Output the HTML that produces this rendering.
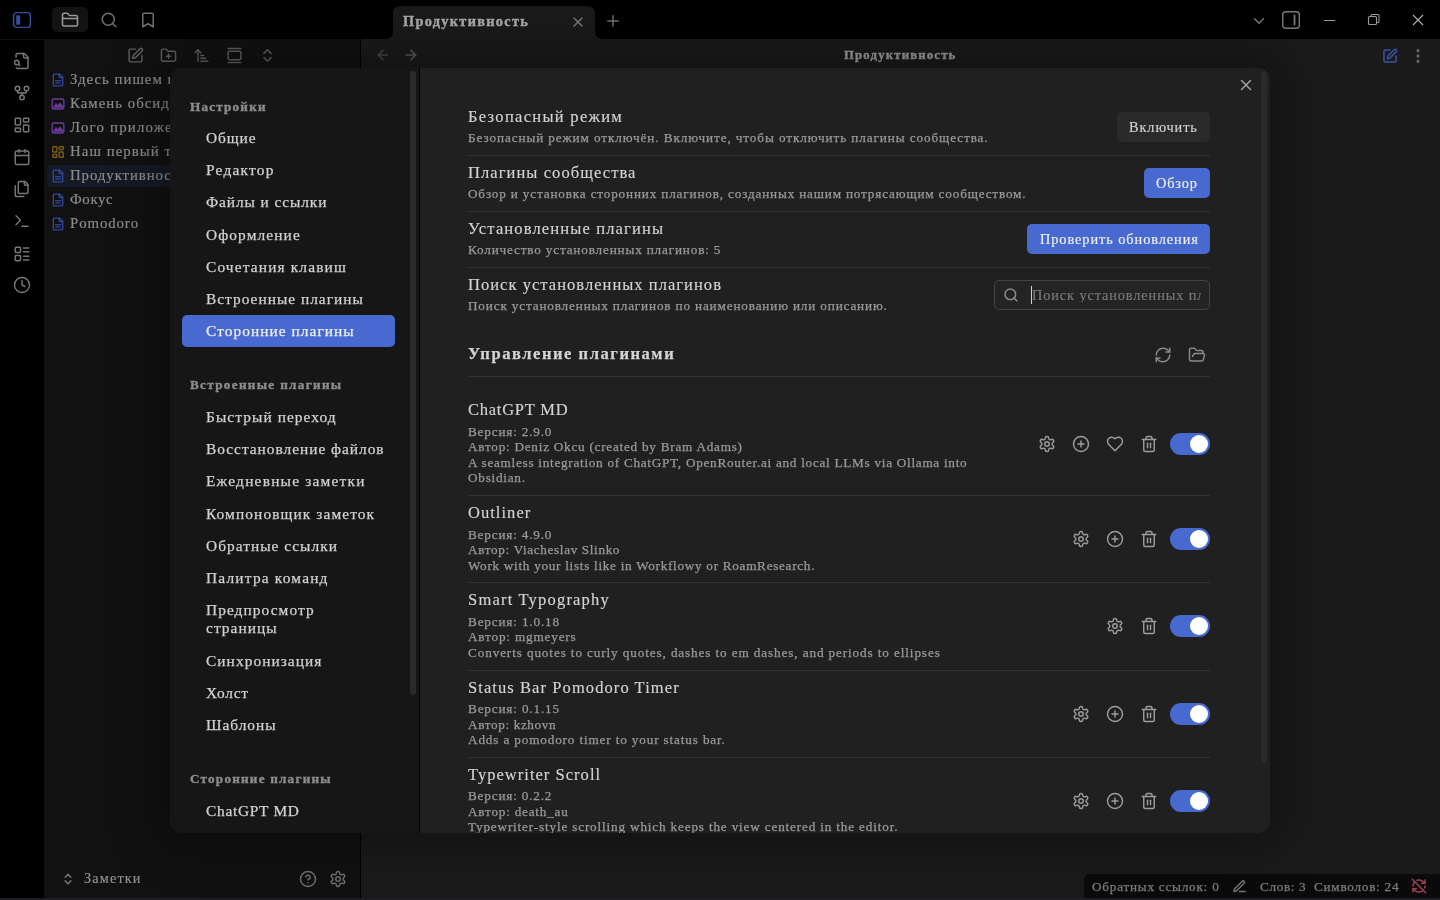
<!DOCTYPE html>
<html><head><meta charset="utf-8"><title>Obsidian</title><style>
*{margin:0;padding:0;box-sizing:border-box}
html,body{width:1440px;height:900px;overflow:hidden;background:#000}
body{position:relative;font-family:"Liberation Serif", serif}
#root{position:absolute;left:0;top:0;width:1440px;height:900px;will-change:transform}
.r{position:absolute}
.t{position:absolute;white-space:nowrap;line-height:1}
.i{position:absolute;overflow:visible}
</style></head>
<body><div id="root"><div class="r" style="left:0px;top:0px;width:1440px;height:39px;background:#000;"></div><div class="r" style="left:0px;top:40px;width:44px;height:858px;background:#000;"></div><div class="r" style="left:0px;top:39px;width:44px;height:1px;background:#101010;"></div><div class="r" style="left:44px;top:39px;width:316px;height:859px;background:#111111;"></div><div class="r" style="left:360px;top:39px;width:1px;height:859px;background:#000;"></div><div class="r" style="left:361px;top:39px;width:1079px;height:859px;background:#1a1a1a;"></div><div class="r" style="left:0px;top:898px;width:1440px;height:2px;background:#1d1e22;"></div><svg class="i" style="left:12px;top:11px" width="20" height="18" viewBox="0 0 20 18"><rect x="1.6" y="1.6" width="16.8" height="14.8" rx="3" fill="none" stroke="#34509a" stroke-width="1.4"/><rect x="4.2" y="4.2" width="4" height="9.6" rx="1.2" fill="#34509a"/></svg><div class="r" style="left:52px;top:7px;width:36px;height:25px;background:#131313;border-radius:5px;"></div><svg class="i" style="left:61.00px;top:10.50px;" width="18" height="18" viewBox="0 0 24 24" fill="none" stroke="#9a9a9a" stroke-width="2.000" stroke-linecap="round" stroke-linejoin="round"><path d="M20 20a2 2 0 0 0 2-2V8a2 2 0 0 0-2-2h-7.9a2 2 0 0 1-1.69-.9L9.6 3.9A2 2 0 0 0 7.93 3H4a2 2 0 0 0-2 2v13a2 2 0 0 0 2 2Z"/><path d="M2 10h20"/></svg><svg class="i" style="left:100.00px;top:10.50px;" width="18" height="18" viewBox="0 0 24 24" fill="none" stroke="#707070" stroke-width="2.000" stroke-linecap="round" stroke-linejoin="round"><circle cx="11" cy="11" r="8"/><path d="m21 21-4.3-4.3"/></svg><svg class="i" style="left:139.00px;top:10.50px;" width="18" height="18" viewBox="0 0 24 24" fill="none" stroke="#707070" stroke-width="2.000" stroke-linecap="round" stroke-linejoin="round"><path d="m19 21-7-4-7 4V5a2 2 0 0 1 2-2h10a2 2 0 0 1 2 2v16z"/></svg><svg class="i" style="left:385px;top:6px" width="218" height="33" viewBox="0 0 218 33"><path d="M0 33 Q8 33 8 25 V8 Q8 0 16 0 H202 Q210 0 210 8 V25 Q210 33 218 33 Z" fill="#1a1a1a"/></svg><div class="t" style="left:403px;top:14px;font-size:14.30px;color:#a8a8a8;font-weight:700;letter-spacing:1.314px;-webkit-text-stroke:0.38px #a8a8a8;">Продуктивность</div><svg class="i" style="left:570.00px;top:14.00px;" width="16" height="16" viewBox="0 0 24 24" fill="none" stroke="#7a7a7a" stroke-width="2.100" stroke-linecap="round" stroke-linejoin="round"><path d="M18 6 6 18"/><path d="m6 6 12 12"/></svg><svg class="i" style="left:604.00px;top:12.00px;" width="18" height="18" viewBox="0 0 24 24" fill="none" stroke="#6e6e6e" stroke-width="2.000" stroke-linecap="round" stroke-linejoin="round"><path d="M5 12h14"/><path d="M12 5v14"/></svg><svg class="i" style="left:1250.00px;top:11.50px;" width="18" height="18" viewBox="0 0 24 24" fill="none" stroke="#777" stroke-width="2.000" stroke-linecap="round" stroke-linejoin="round"><path d="m6 9 6 6 6-6"/></svg><svg class="i" style="left:1281px;top:10px" width="20" height="20" viewBox="0 0 20 20"><rect x="1.7" y="1.7" width="16.6" height="16.6" rx="3" fill="none" stroke="#7a7a7a" stroke-width="1.4"/><rect x="12.6" y="4.6" width="1.8" height="10.8" rx=".9" fill="#7a7a7a"/></svg><div class="r" style="left:1324px;top:20px;width:11px;height:1.3px;background:#999;"></div><svg class="i" style="left:1367px;top:13px" width="14" height="14" viewBox="0 0 14 14" fill="none" stroke="#999" stroke-width="1.1"><rect x="1.5" y="3.5" width="8" height="8" rx="1"/><path d="M4 3.5V2.5a1 1 0 0 1 1-1h6a1 1 0 0 1 1 1v6a1 1 0 0 1-1 1h-1.5"/></svg><svg class="i" style="left:1412px;top:14px" width="12" height="12" viewBox="0 0 12 12" stroke="#aaa" stroke-width="1.2"><path d="M1 1L11 11M11 1L1 11"/></svg><svg class="i" style="left:13.00px;top:52.00px;" width="18" height="18" viewBox="0 0 24 24" fill="none" stroke="#777" stroke-width="1.933" stroke-linecap="round" stroke-linejoin="round"><path d="M14 2v4a2 2 0 0 0 2 2h4"/><path d="M4.268 21a2 2 0 0 0 1.727 1H18a2 2 0 0 0 2-2V7l-5-5H6a2 2 0 0 0-2 2v3"/><path d="m9 18-1.5-1.5"/><circle cx="5" cy="14" r="3"/></svg><svg class="i" style="left:13.00px;top:84.00px;" width="18" height="18" viewBox="0 0 24 24" fill="none" stroke="#777" stroke-width="1.933" stroke-linecap="round" stroke-linejoin="round"><circle cx="12" cy="18" r="3"/><circle cx="6" cy="6" r="3"/><circle cx="18" cy="6" r="3"/><path d="M18 9v2c0 .6-.4 1-1 1H7c-.6 0-1-.4-1-1V9"/><path d="M12 12v3"/></svg><svg class="i" style="left:13.00px;top:116.00px;" width="18" height="18" viewBox="0 0 24 24" fill="none" stroke="#777" stroke-width="1.933" stroke-linecap="round" stroke-linejoin="round"><rect width="7" height="9" x="3" y="3" rx="1"/><rect width="7" height="5" x="14" y="3" rx="1"/><rect width="7" height="9" x="14" y="12" rx="1"/><rect width="7" height="5" x="3" y="16" rx="1"/></svg><svg class="i" style="left:13.00px;top:148.00px;" width="18" height="18" viewBox="0 0 24 24" fill="none" stroke="#777" stroke-width="1.933" stroke-linecap="round" stroke-linejoin="round"><path d="M8 2v4"/><path d="M16 2v4"/><rect width="18" height="18" x="3" y="4" rx="2"/><path d="M3 10h18"/></svg><svg class="i" style="left:13.00px;top:180.00px;" width="18" height="18" viewBox="0 0 24 24" fill="none" stroke="#777" stroke-width="1.933" stroke-linecap="round" stroke-linejoin="round"><path d="M20 7h-3a2 2 0 0 1-2-2V2"/><path d="M9 18a2 2 0 0 1-2-2V4a2 2 0 0 1 2-2h7l4 4v10a2 2 0 0 1-2 2Z"/><path d="M3 7.6v12.8A1.6 1.6 0 0 0 4.6 22h9.8"/></svg><svg class="i" style="left:13.00px;top:212.00px;" width="18" height="18" viewBox="0 0 24 24" fill="none" stroke="#777" stroke-width="1.933" stroke-linecap="round" stroke-linejoin="round"><polyline points="4 17 10 11 4 5"/><line x1="12" x2="20" y1="19" y2="19"/></svg><svg class="i" style="left:13.00px;top:244.50px;" width="18" height="18" viewBox="0 0 24 24" fill="none" stroke="#777" stroke-width="1.933" stroke-linecap="round" stroke-linejoin="round"><rect width="7" height="7" x="3" y="3" rx="1"/><rect width="7" height="7" x="3" y="14" rx="1"/><path d="M14 4h7"/><path d="M14 9h7"/><path d="M14 15h7"/><path d="M14 20h7"/></svg><svg class="i" style="left:13.00px;top:276.00px;" width="18" height="18" viewBox="0 0 24 24" fill="none" stroke="#777" stroke-width="1.933" stroke-linecap="round" stroke-linejoin="round"><circle cx="12" cy="12" r="10"/><polyline points="12 6 12 12 16 14"/></svg><svg class="i" style="left:127.00px;top:47.00px;" width="17" height="17" viewBox="0 0 24 24" fill="none" stroke="#5e5e5e" stroke-width="2.047" stroke-linecap="round" stroke-linejoin="round"><path d="M12 3H5a2 2 0 0 0-2 2v14a2 2 0 0 0 2 2h14a2 2 0 0 0 2-2v-7"/><path d="M18.375 2.625a1 1 0 0 1 3 3l-9.013 9.014a2 2 0 0 1-.853.505l-2.873.84a.5.5 0 0 1-.62-.62l.84-2.873a2 2 0 0 1 .506-.852z"/></svg><svg class="i" style="left:160.00px;top:47.00px;" width="17" height="17" viewBox="0 0 24 24" fill="none" stroke="#5e5e5e" stroke-width="2.047" stroke-linecap="round" stroke-linejoin="round"><path d="M12 10v6"/><path d="M9 13h6"/><path d="M20 20a2 2 0 0 0 2-2V8a2 2 0 0 0-2-2h-7.9a2 2 0 0 1-1.69-.9L9.6 3.9A2 2 0 0 0 7.93 3H4a2 2 0 0 0-2 2v13a2 2 0 0 0 2 2Z"/></svg><svg class="i" style="left:193.00px;top:47.00px;" width="17" height="17" viewBox="0 0 24 24" fill="none" stroke="#5e5e5e" stroke-width="2.047" stroke-linecap="round" stroke-linejoin="round"><path d="m3 8 4-4 4 4"/><path d="M7 4v16"/><path d="M11 12h4"/><path d="M11 16h7"/><path d="M11 20h10"/></svg><svg class="i" style="left:226.00px;top:47.00px;" width="17" height="17" viewBox="0 0 24 24" fill="none" stroke="#5e5e5e" stroke-width="2.047" stroke-linecap="round" stroke-linejoin="round"><path d="M3 2h18"/><rect width="18" height="12" x="3" y="6" rx="2"/><path d="M3 22h18"/></svg><svg class="i" style="left:259.00px;top:47.00px;" width="17" height="17" viewBox="0 0 24 24" fill="none" stroke="#5e5e5e" stroke-width="2.047" stroke-linecap="round" stroke-linejoin="round"><path d="m7 15 5 5 5-5"/><path d="m7 9 5-5 5 5"/></svg><div class="r" style="left:47px;top:165px;width:130px;height:22px;background:#151a26;border-radius:4px;"></div><svg class="i" style="left:51.00px;top:72.50px;" width="14" height="14" viewBox="0 0 24 24" fill="none" stroke="#30499a" stroke-width="2.314" stroke-linecap="round" stroke-linejoin="round"><path d="M15 2H6a2 2 0 0 0-2 2v16a2 2 0 0 0 2 2h12a2 2 0 0 0 2-2V7Z"/><path d="M14 2v4a2 2 0 0 0 2 2h4"/><path d="M16 13H8"/><path d="M16 17H8"/></svg><div class="t" style="left:70px;top:72px;font-size:14.85px;color:#8c8c8c;letter-spacing:0.986px;-webkit-text-stroke:0.17px #8c8c8c;">Здесь пишем к</div><svg class="i" style="left:51.00px;top:96.50px;" width="14" height="14" viewBox="0 0 24 24" fill="none" stroke="#6e3c9e" stroke-width="2.314" stroke-linecap="round" stroke-linejoin="round"><rect width="20" height="17" x="2" y="3.5" rx="3"/><path d="M4.5 18 L8.5 11 L11.5 14.5 L15.5 10 L19.5 15.5 V18 Z" fill="#6a3a98" stroke-width="1.2"/></svg><div class="t" style="left:70px;top:96px;font-size:14.85px;color:#8c8c8c;letter-spacing:1.002px;-webkit-text-stroke:0.17px #8c8c8c;">Камень обсидиана</div><svg class="i" style="left:51.00px;top:120.50px;" width="14" height="14" viewBox="0 0 24 24" fill="none" stroke="#6e3c9e" stroke-width="2.314" stroke-linecap="round" stroke-linejoin="round"><rect width="20" height="17" x="2" y="3.5" rx="3"/><path d="M4.5 18 L8.5 11 L11.5 14.5 L15.5 10 L19.5 15.5 V18 Z" fill="#6a3a98" stroke-width="1.2"/></svg><div class="t" style="left:70px;top:120px;font-size:14.85px;color:#8c8c8c;letter-spacing:1.203px;-webkit-text-stroke:0.17px #8c8c8c;">Лого приложения</div><svg class="i" style="left:51.00px;top:144.50px;" width="14" height="14" viewBox="0 0 24 24" fill="none" stroke="#7a5c18" stroke-width="2.314" stroke-linecap="round" stroke-linejoin="round"><rect width="7" height="9" x="3" y="3" rx="1"/><rect width="7" height="5" x="14" y="3" rx="1"/><rect width="7" height="9" x="14" y="12" rx="1"/><rect width="7" height="5" x="3" y="16" rx="1"/></svg><div class="t" style="left:70px;top:144px;font-size:14.85px;color:#8c8c8c;letter-spacing:1.051px;-webkit-text-stroke:0.17px #8c8c8c;">Наш первый текст</div><svg class="i" style="left:51.00px;top:168.50px;" width="14" height="14" viewBox="0 0 24 24" fill="none" stroke="#30499a" stroke-width="2.314" stroke-linecap="round" stroke-linejoin="round"><path d="M15 2H6a2 2 0 0 0-2 2v16a2 2 0 0 0 2 2h12a2 2 0 0 0 2-2V7Z"/><path d="M14 2v4a2 2 0 0 0 2 2h4"/><path d="M16 13H8"/><path d="M16 17H8"/></svg><div class="t" style="left:70px;top:168px;font-size:14.85px;color:#8c8c8c;letter-spacing:0.904px;-webkit-text-stroke:0.17px #8c8c8c;">Продуктивность</div><svg class="i" style="left:51.00px;top:192.50px;" width="14" height="14" viewBox="0 0 24 24" fill="none" stroke="#30499a" stroke-width="2.314" stroke-linecap="round" stroke-linejoin="round"><path d="M15 2H6a2 2 0 0 0-2 2v16a2 2 0 0 0 2 2h12a2 2 0 0 0 2-2V7Z"/><path d="M14 2v4a2 2 0 0 0 2 2h4"/><path d="M16 13H8"/><path d="M16 17H8"/></svg><div class="t" style="left:70px;top:192px;font-size:14.85px;color:#8c8c8c;letter-spacing:0.622px;-webkit-text-stroke:0.17px #8c8c8c;">Фокус</div><svg class="i" style="left:51.00px;top:216.50px;" width="14" height="14" viewBox="0 0 24 24" fill="none" stroke="#30499a" stroke-width="2.314" stroke-linecap="round" stroke-linejoin="round"><path d="M15 2H6a2 2 0 0 0-2 2v16a2 2 0 0 0 2 2h12a2 2 0 0 0 2-2V7Z"/><path d="M14 2v4a2 2 0 0 0 2 2h4"/><path d="M16 13H8"/><path d="M16 17H8"/></svg><div class="t" style="left:70px;top:216px;font-size:14.85px;color:#8c8c8c;letter-spacing:0.887px;-webkit-text-stroke:0.17px #8c8c8c;">Pomodoro</div><svg class="i" style="left:61.00px;top:872.00px;" width="14" height="14" viewBox="0 0 24 24" fill="none" stroke="#777" stroke-width="2.400" stroke-linecap="round" stroke-linejoin="round"><path d="m7 15 5 5 5-5"/><path d="m7 9 5-5 5 5"/></svg><div class="t" style="left:84px;top:871px;font-size:14.30px;color:#939393;letter-spacing:1.127px;-webkit-text-stroke:0.15px #939393;">Заметки</div><svg class="i" style="left:299.00px;top:870.00px;" width="18" height="18" viewBox="0 0 24 24" fill="none" stroke="#6e6e6e" stroke-width="2.000" stroke-linecap="round" stroke-linejoin="round"><circle cx="12" cy="12" r="10"/><path d="M9.09 9a3 3 0 0 1 5.83 1c0 2-3 3-3 3"/><path d="M12 17h.01"/></svg><svg class="i" style="left:329.00px;top:870.00px;" width="18" height="18" viewBox="0 0 24 24" fill="none" stroke="#6e6e6e" stroke-width="2.000" stroke-linecap="round" stroke-linejoin="round"><path d="M12.22 2h-.44a2 2 0 0 0-2 2v.18a2 2 0 0 1-1 1.73l-.43.25a2 2 0 0 1-2 0l-.15-.08a2 2 0 0 0-2.73.73l-.22.38a2 2 0 0 0 .73 2.730l.15.1a2 2 0 0 1 1 1.72v.51a2 2 0 0 1-1 1.74l-.15.09a2 2 0 0 0-.73 2.73l.22.38a2 2 0 0 0 2.73.73l.15-.08a2 2 0 0 1 2 0l.43.25a2 2 0 0 1 1 1.73V20a2 2 0 0 0 2 2h.44a2 2 0 0 0 2-2v-.18a2 2 0 0 1 1-1.73l.43-.25a2 2 0 0 1 2 0l.15.08a2 2 0 0 0 2.73-.73l.22-.39a2 2 0 0 0-.73-2.73l-.15-.08a2 2 0 0 1-1-1.74v-.5a2 2 0 0 1 1-1.74l.15-.09a2 2 0 0 0 .73-2.73l-.22-.38a2 2 0 0 0-2.73-.73l-.15.08a2 2 0 0 1-2 0l-.43-.25a2 2 0 0 1-1-1.73V4a2 2 0 0 0-2-2z"/><circle cx="12" cy="12" r="3"/></svg><svg class="i" style="left:375.00px;top:47.00px;" width="16" height="16" viewBox="0 0 24 24" fill="none" stroke="#454545" stroke-width="2.400" stroke-linecap="round" stroke-linejoin="round"><path d="m12 19-7-7 7-7"/><path d="M19 12H5"/></svg><svg class="i" style="left:403.00px;top:47.00px;" width="16" height="16" viewBox="0 0 24 24" fill="none" stroke="#5a5a5a" stroke-width="2.400" stroke-linecap="round" stroke-linejoin="round"><path d="M5 12h14"/><path d="m12 5 7 7-7 7"/></svg><div class="t" style="left:844px;top:49px;font-size:12.76px;color:#9a9a9a;font-weight:700;letter-spacing:1.172px;-webkit-text-stroke:0.38px #9a9a9a;">Продуктивность</div><svg class="i" style="left:1382.00px;top:47.50px;" width="16" height="16" viewBox="0 0 24 24" fill="none" stroke="#3a55a5" stroke-width="2.250" stroke-linecap="round" stroke-linejoin="round"><path d="M12 3H5a2 2 0 0 0-2 2v14a2 2 0 0 0 2 2h14a2 2 0 0 0 2-2v-7"/><path d="M18.375 2.625a1 1 0 0 1 3 3l-9.013 9.014a2 2 0 0 1-.853.505l-2.873.84a.5.5 0 0 1-.62-.62l.84-2.873a2 2 0 0 1 .506-.852z"/></svg><svg class="i" style="left:1409.00px;top:46.50px;" width="18" height="18" viewBox="0 0 24 24" fill="none" stroke="#666" stroke-width="2.400" stroke-linecap="round" stroke-linejoin="round"><circle cx="12" cy="12" r="1"/><circle cx="12" cy="5" r="1"/><circle cx="12" cy="19" r="1"/></svg><div class="r" style="left:1084px;top:874px;width:356px;height:24px;background:#0a0a0a;border-top-left-radius:6px;"></div><div class="t" style="left:1092px;top:880px;font-size:13.20px;color:#7d7d7d;letter-spacing:0.771px;-webkit-text-stroke:0.25px #7d7d7d;">Обратных ссылок: 0</div><svg class="i" style="left:1231.50px;top:878.50px;" width="15" height="15" viewBox="0 0 24 24" fill="none" stroke="#777" stroke-width="2.240" stroke-linecap="round" stroke-linejoin="round"><path d="M12 20h9"/><path d="M16.376 3.622a1 1 0 0 1 3.002 3.002L7.368 18.635a2 2 0 0 1-.855.506l-2.872.838a.5.5 0 0 1-.62-.62l.838-2.872a2 2 0 0 1 .506-.854z"/></svg><div class="t" style="left:1260px;top:880px;font-size:13.20px;color:#7d7d7d;letter-spacing:0.645px;-webkit-text-stroke:0.25px #7d7d7d;">Слов: 3</div><div class="t" style="left:1314px;top:880px;font-size:13.20px;color:#7d7d7d;letter-spacing:0.743px;-webkit-text-stroke:0.25px #7d7d7d;">Символов: 24</div><svg class="i" style="left:1411.00px;top:878.00px;" width="16" height="16" viewBox="0 0 24 24" fill="none" stroke="#a04252" stroke-width="2.250" stroke-linecap="round" stroke-linejoin="round"><path d="M21 8L18.74 5.74A9.75 9.75 0 0 0 12 3C11 3 10.03 3.160 9.13 3.47"/><path d="M8 16H3v5"/><path d="M3 12C3 9.51 4 7.26 5.64 5.64"/><path d="m3 16 2.26 2.26A9.75 9.75 0 0 0 12 21c2.49 0 4.74-1 6.36-2.64"/><path d="M21 12c0 1-.16 1.97-.47 2.87"/><path d="M21 3v5h-5"/><path d="M22 22 2 2"/></svg><div class="r" style="left:170px;top:68px;width:1100px;height:765px;border-radius:12px;box-shadow:0 0 50px 10px rgba(0,0,0,0.35);"></div><div class="r" style="left:0;top:0;width:1440px;height:900px;clip-path:inset(68px 170px 67px 170px round 12px);"><div class="r" style="left:170px;top:68px;width:250px;height:765px;background:#161616;"></div><div class="r" style="left:419px;top:68px;width:1px;height:765px;background:#000;"></div><div class="r" style="left:420px;top:68px;width:850px;height:765px;background:#202020;"></div><div class="r" style="left:410px;top:71px;width:6px;height:624px;background:#2a2a2a;border-radius:3px;"></div><div class="r" style="left:1261px;top:71px;width:6px;height:692px;background:#2a2a2a;border-radius:3px;"></div><div class="t" style="left:190px;top:100px;font-size:13.20px;color:#8c8c8c;font-weight:700;letter-spacing:1.182px;-webkit-text-stroke:0.38px #8c8c8c;">Настройки</div><div class="t" style="left:206px;top:130px;font-size:15.40px;color:#d2d2d2;letter-spacing:0.934px;-webkit-text-stroke:0.25px #d2d2d2;">Общие</div><div class="t" style="left:206px;top:162px;font-size:15.40px;color:#d2d2d2;letter-spacing:1.215px;-webkit-text-stroke:0.25px #d2d2d2;">Редактор</div><div class="t" style="left:206px;top:194px;font-size:15.40px;color:#d2d2d2;letter-spacing:0.914px;-webkit-text-stroke:0.25px #d2d2d2;">Файлы и ссылки</div><div class="t" style="left:206px;top:227px;font-size:15.40px;color:#d2d2d2;letter-spacing:1.103px;-webkit-text-stroke:0.25px #d2d2d2;">Оформление</div><div class="t" style="left:206px;top:259px;font-size:15.40px;color:#d2d2d2;letter-spacing:1.145px;-webkit-text-stroke:0.25px #d2d2d2;">Сочетания клавиш</div><div class="t" style="left:206px;top:291px;font-size:15.40px;color:#d2d2d2;letter-spacing:1.001px;-webkit-text-stroke:0.25px #d2d2d2;">Встроенные плагины</div><div class="r" style="left:182px;top:315px;width:213px;height:32px;background:#486ad0;border-radius:5px;"></div><div class="t" style="left:206px;top:323px;font-size:15.40px;color:#f0f0f0;letter-spacing:1.046px;-webkit-text-stroke:0.25px #f0f0f0;">Сторонние плагины</div><div class="t" style="left:190px;top:378px;font-size:13.20px;color:#8c8c8c;font-weight:700;letter-spacing:1.312px;-webkit-text-stroke:0.38px #8c8c8c;">Встроенные плагины</div><div class="t" style="left:206px;top:409px;font-size:15.40px;color:#d2d2d2;letter-spacing:1.073px;-webkit-text-stroke:0.25px #d2d2d2;">Быстрый переход</div><div class="t" style="left:206px;top:441px;font-size:15.40px;color:#d2d2d2;letter-spacing:0.975px;-webkit-text-stroke:0.25px #d2d2d2;">Восстановление файлов</div><div class="t" style="left:206px;top:473px;font-size:15.40px;color:#d2d2d2;letter-spacing:1.216px;-webkit-text-stroke:0.25px #d2d2d2;">Ежедневные заметки</div><div class="t" style="left:206px;top:506px;font-size:15.40px;color:#d2d2d2;letter-spacing:1.095px;-webkit-text-stroke:0.25px #d2d2d2;">Компоновщик заметок</div><div class="t" style="left:206px;top:538px;font-size:15.40px;color:#d2d2d2;letter-spacing:1.034px;-webkit-text-stroke:0.25px #d2d2d2;">Обратные ссылки</div><div class="t" style="left:206px;top:570px;font-size:15.40px;color:#d2d2d2;letter-spacing:1.195px;-webkit-text-stroke:0.25px #d2d2d2;">Палитра команд</div><div class="t" style="left:206px;top:602px;font-size:15.40px;color:#d2d2d2;letter-spacing:1.060px;-webkit-text-stroke:0.25px #d2d2d2;">Предпросмотр</div><div class="t" style="left:206px;top:620px;font-size:15.40px;color:#d2d2d2;letter-spacing:1.047px;-webkit-text-stroke:0.25px #d2d2d2;">страницы</div><div class="t" style="left:206px;top:653px;font-size:15.40px;color:#d2d2d2;letter-spacing:1.055px;-webkit-text-stroke:0.25px #d2d2d2;">Синхронизация</div><div class="t" style="left:206px;top:685px;font-size:15.40px;color:#d2d2d2;letter-spacing:0.800px;-webkit-text-stroke:0.25px #d2d2d2;">Холст</div><div class="t" style="left:206px;top:717px;font-size:15.40px;color:#d2d2d2;letter-spacing:0.969px;-webkit-text-stroke:0.25px #d2d2d2;">Шаблоны</div><div class="t" style="left:190px;top:772px;font-size:13.20px;color:#8c8c8c;font-weight:700;letter-spacing:1.209px;-webkit-text-stroke:0.38px #8c8c8c;">Сторонние плагины</div><div class="t" style="left:206px;top:803px;font-size:15.40px;color:#d2d2d2;letter-spacing:0.714px;-webkit-text-stroke:0.25px #d2d2d2;">ChatGPT MD</div><div class="t" style="left:468px;top:109px;font-size:16.50px;color:#d4d4d4;letter-spacing:1.303px;-webkit-text-stroke:0.15px #d4d4d4;">Безопасный режим</div><div class="t" style="left:468px;top:131px;font-size:13.20px;color:#9a9a9a;letter-spacing:0.906px;-webkit-text-stroke:0.25px #9a9a9a;">Безопасный режим отключён. Включите, чтобы отключить плагины сообщества.</div><div class="r" style="left:468px;top:155px;width:742px;height:1px;background:#333333;"></div><div class="t" style="left:468px;top:165px;font-size:16.50px;color:#d4d4d4;letter-spacing:1.073px;-webkit-text-stroke:0.15px #d4d4d4;">Плагины сообщества</div><div class="t" style="left:468px;top:187px;font-size:13.20px;color:#9a9a9a;letter-spacing:0.833px;-webkit-text-stroke:0.25px #9a9a9a;">Обзор и установка сторонних плагинов, созданных нашим потрясающим сообществом.</div><div class="r" style="left:468px;top:211px;width:742px;height:1px;background:#333333;"></div><div class="t" style="left:468px;top:221px;font-size:16.50px;color:#d4d4d4;letter-spacing:1.149px;-webkit-text-stroke:0.15px #d4d4d4;">Установленные плагины</div><div class="t" style="left:468px;top:243px;font-size:13.20px;color:#9a9a9a;letter-spacing:0.833px;-webkit-text-stroke:0.25px #9a9a9a;">Количество установленных плагинов: 5</div><div class="r" style="left:468px;top:267px;width:742px;height:1px;background:#333333;"></div><div class="t" style="left:468px;top:277px;font-size:16.50px;color:#d4d4d4;letter-spacing:1.036px;-webkit-text-stroke:0.15px #d4d4d4;">Поиск установленных плагинов</div><div class="t" style="left:468px;top:299px;font-size:13.20px;color:#9a9a9a;letter-spacing:0.843px;-webkit-text-stroke:0.25px #9a9a9a;">Поиск установленных плагинов по наименованию или описанию.</div><div class="r" style="left:1117px;top:112px;width:93px;height:30px;background:#2a2a2a;border-radius:5px;"></div><div class="t" style="left:1129px;top:120px;font-size:14.30px;color:#d4d4d4;letter-spacing:0.928px;-webkit-text-stroke:0.15px #d4d4d4;">Включить</div><div class="r" style="left:1144px;top:168px;width:66px;height:30px;background:#486ad0;border-radius:5px;"></div><div class="t" style="left:1156px;top:176px;font-size:14.30px;color:#f0f0f0;letter-spacing:0.853px;-webkit-text-stroke:0.15px #f0f0f0;">Обзор</div><div class="r" style="left:1027px;top:224px;width:183px;height:30px;background:#486ad0;border-radius:5px;"></div><div class="t" style="left:1040px;top:232px;font-size:14.30px;color:#f0f0f0;letter-spacing:0.946px;-webkit-text-stroke:0.15px #f0f0f0;">Проверить обновления</div><div class="r" style="left:994px;top:280px;width:216px;height:30px;background:#242424;border-radius:5px;border:1px solid #444;"></div><svg class="i" style="left:1003.00px;top:287.00px;" width="16" height="16" viewBox="0 0 24 24" fill="none" stroke="#8a8a8a" stroke-width="2.250" stroke-linecap="round" stroke-linejoin="round"><circle cx="11" cy="11" r="8"/><path d="m21 21-4.3-4.3"/></svg><div class="r" style="left:1031px;top:286px;width:1px;height:18px;background:#d0d0d0;"></div><div class="t" style="left:1032px;top:288px;font-size:14.30px;color:#7a7a7a;letter-spacing:0.900px;-webkit-text-stroke:0.15px #7a7a7a;width:169px;overflow:hidden;">Поиск установленных плагинов</div><div class="t" style="left:468px;top:346px;font-size:16.50px;color:#d4d4d4;font-weight:700;letter-spacing:1.563px;-webkit-text-stroke:0.25px #d4d4d4;">Управление плагинами</div><svg class="i" style="left:1154.00px;top:346.00px;" width="18" height="18" viewBox="0 0 24 24" fill="none" stroke="#8a8a8a" stroke-width="2.000" stroke-linecap="round" stroke-linejoin="round"><path d="M3 12a9 9 0 0 1 9-9 9.75 9.75 0 0 1 6.74 2.74L21 8"/><path d="M21 3v5h-5"/><path d="M21 12a9 9 0 0 1-9 9 9.75 9.75 0 0 1-6.74-2.74L3 16"/><path d="M8 16H3v5"/></svg><svg class="i" style="left:1188.00px;top:346.00px;" width="18" height="18" viewBox="0 0 24 24" fill="none" stroke="#8a8a8a" stroke-width="2.000" stroke-linecap="round" stroke-linejoin="round"><path d="m6 14 1.5-2.9A2 2 0 0 1 9.24 10H20a2 2 0 0 1 1.94 2.5l-1.54 6a2 2 0 0 1-1.95 1.5H4a2 2 0 0 1-2-2V5a2 2 0 0 1 2-2h3.9a2 2 0 0 1 1.69.9l.81 1.2a2 2 0 0 0 1.67.9H18a2 2 0 0 1 2 2v2"/></svg><div class="r" style="left:468px;top:376px;width:742px;height:1px;background:#333333;"></div><div class="t" style="left:468px;top:402px;font-size:16.50px;color:#d4d4d4;letter-spacing:0.759px;-webkit-text-stroke:0.15px #d4d4d4;">ChatGPT MD</div><div class="t" style="left:468px;top:425px;font-size:13.20px;color:#9a9a9a;letter-spacing:0.825px;-webkit-text-stroke:0.25px #9a9a9a;">Версия: 2.9.0</div><div class="t" style="left:468px;top:440px;font-size:13.20px;color:#9a9a9a;letter-spacing:0.758px;-webkit-text-stroke:0.25px #9a9a9a;">Автор: Deniz Okcu (created by Bram Adams)</div><div class="t" style="left:468px;top:456px;font-size:13.20px;color:#9a9a9a;letter-spacing:0.729px;-webkit-text-stroke:0.25px #9a9a9a;">A seamless integration of ChatGPT, OpenRouter.ai and local LLMs via Ollama into</div><div class="t" style="left:468px;top:471px;font-size:13.20px;color:#9a9a9a;letter-spacing:0.757px;-webkit-text-stroke:0.25px #9a9a9a;">Obsidian.</div><svg class="i" style="left:1038.00px;top:435.00px;" width="18" height="18" viewBox="0 0 24 24" fill="none" stroke="#9c9c9c" stroke-width="1.933" stroke-linecap="round" stroke-linejoin="round"><path d="M12.22 2h-.44a2 2 0 0 0-2 2v.18a2 2 0 0 1-1 1.73l-.43.25a2 2 0 0 1-2 0l-.15-.08a2 2 0 0 0-2.73.73l-.22.38a2 2 0 0 0 .73 2.730l.15.1a2 2 0 0 1 1 1.72v.51a2 2 0 0 1-1 1.74l-.15.09a2 2 0 0 0-.73 2.73l.22.38a2 2 0 0 0 2.73.73l.15-.08a2 2 0 0 1 2 0l.43.25a2 2 0 0 1 1 1.73V20a2 2 0 0 0 2 2h.44a2 2 0 0 0 2-2v-.18a2 2 0 0 1 1-1.73l.43-.25a2 2 0 0 1 2 0l.15.08a2 2 0 0 0 2.73-.73l.22-.39a2 2 0 0 0-.73-2.73l-.15-.08a2 2 0 0 1-1-1.74v-.5a2 2 0 0 1 1-1.74l.15-.09a2 2 0 0 0 .73-2.73l-.22-.38a2 2 0 0 0-2.73-.73l-.15.08a2 2 0 0 1-2 0l-.43-.25a2 2 0 0 1-1-1.73V4a2 2 0 0 0-2-2z"/><circle cx="12" cy="12" r="3"/></svg><svg class="i" style="left:1072.00px;top:435.00px;" width="18" height="18" viewBox="0 0 24 24" fill="none" stroke="#9c9c9c" stroke-width="1.933" stroke-linecap="round" stroke-linejoin="round"><circle cx="12" cy="12" r="10"/><path d="M8 12h8"/><path d="M12 8v8"/></svg><svg class="i" style="left:1106.00px;top:435.00px;" width="18" height="18" viewBox="0 0 24 24" fill="none" stroke="#9c9c9c" stroke-width="1.933" stroke-linecap="round" stroke-linejoin="round"><path d="M19 14c1.49-1.46 3-3.21 3-5.5A5.5 5.5 0 0 0 16.5 3c-1.76 0-3 .5-4.5 2-1.5-1.5-2.74-2-4.5-2A5.5 5.5 0 0 0 2 8.5c0 2.3 1.5 4.05 3 5.5l7 7Z"/></svg><svg class="i" style="left:1140.00px;top:435.00px;" width="18" height="18" viewBox="0 0 24 24" fill="none" stroke="#9c9c9c" stroke-width="1.933" stroke-linecap="round" stroke-linejoin="round"><path d="M3 6h18"/><path d="M19 6v14c0 1-1 2-2 2H7c-1 0-2-1-2-2V6"/><path d="M8 6V4c0-1 1-2 2-2h4c1 0 2 1 2 2v2"/><line x1="10" x2="10" y1="11" y2="17"/><line x1="14" x2="14" y1="11" y2="17"/></svg><div class="r" style="left:1170px;top:433px;width:40px;height:22px;background:#486ad0;border-radius:11px;"></div><div class="r" style="left:1190px;top:435px;width:18px;height:18px;border-radius:9px;background:#fff"></div><div class="r" style="left:468px;top:495px;width:742px;height:1px;background:#333333;"></div><div class="t" style="left:468px;top:505px;font-size:16.50px;color:#d4d4d4;letter-spacing:1.037px;-webkit-text-stroke:0.15px #d4d4d4;">Outliner</div><div class="t" style="left:468px;top:528px;font-size:13.20px;color:#9a9a9a;letter-spacing:0.825px;-webkit-text-stroke:0.25px #9a9a9a;">Версия: 4.9.0</div><div class="t" style="left:468px;top:543px;font-size:13.20px;color:#9a9a9a;letter-spacing:0.642px;-webkit-text-stroke:0.25px #9a9a9a;">Автор: Viacheslav Slinko</div><div class="t" style="left:468px;top:559px;font-size:13.20px;color:#9a9a9a;letter-spacing:0.715px;-webkit-text-stroke:0.25px #9a9a9a;">Work with your lists like in Workflowy or RoamResearch.</div><svg class="i" style="left:1072.00px;top:530.00px;" width="18" height="18" viewBox="0 0 24 24" fill="none" stroke="#9c9c9c" stroke-width="1.933" stroke-linecap="round" stroke-linejoin="round"><path d="M12.22 2h-.44a2 2 0 0 0-2 2v.18a2 2 0 0 1-1 1.73l-.43.25a2 2 0 0 1-2 0l-.15-.08a2 2 0 0 0-2.73.73l-.22.38a2 2 0 0 0 .73 2.730l.15.1a2 2 0 0 1 1 1.72v.51a2 2 0 0 1-1 1.74l-.15.09a2 2 0 0 0-.73 2.73l.22.38a2 2 0 0 0 2.73.73l.15-.08a2 2 0 0 1 2 0l.43.25a2 2 0 0 1 1 1.73V20a2 2 0 0 0 2 2h.44a2 2 0 0 0 2-2v-.18a2 2 0 0 1 1-1.73l.43-.25a2 2 0 0 1 2 0l.15.08a2 2 0 0 0 2.73-.73l.22-.39a2 2 0 0 0-.73-2.73l-.15-.08a2 2 0 0 1-1-1.74v-.5a2 2 0 0 1 1-1.74l.15-.09a2 2 0 0 0 .73-2.73l-.22-.38a2 2 0 0 0-2.73-.73l-.15.08a2 2 0 0 1-2 0l-.43-.25a2 2 0 0 1-1-1.73V4a2 2 0 0 0-2-2z"/><circle cx="12" cy="12" r="3"/></svg><svg class="i" style="left:1106.00px;top:530.00px;" width="18" height="18" viewBox="0 0 24 24" fill="none" stroke="#9c9c9c" stroke-width="1.933" stroke-linecap="round" stroke-linejoin="round"><circle cx="12" cy="12" r="10"/><path d="M8 12h8"/><path d="M12 8v8"/></svg><svg class="i" style="left:1140.00px;top:530.00px;" width="18" height="18" viewBox="0 0 24 24" fill="none" stroke="#9c9c9c" stroke-width="1.933" stroke-linecap="round" stroke-linejoin="round"><path d="M3 6h18"/><path d="M19 6v14c0 1-1 2-2 2H7c-1 0-2-1-2-2V6"/><path d="M8 6V4c0-1 1-2 2-2h4c1 0 2 1 2 2v2"/><line x1="10" x2="10" y1="11" y2="17"/><line x1="14" x2="14" y1="11" y2="17"/></svg><div class="r" style="left:1170px;top:528px;width:40px;height:22px;background:#486ad0;border-radius:11px;"></div><div class="r" style="left:1190px;top:530px;width:18px;height:18px;border-radius:9px;background:#fff"></div><div class="r" style="left:468px;top:582px;width:742px;height:1px;background:#333333;"></div><div class="t" style="left:468px;top:592px;font-size:16.50px;color:#d4d4d4;letter-spacing:1.202px;-webkit-text-stroke:0.15px #d4d4d4;">Smart Typography</div><div class="t" style="left:468px;top:615px;font-size:13.20px;color:#9a9a9a;letter-spacing:0.840px;-webkit-text-stroke:0.25px #9a9a9a;">Версия: 1.0.18</div><div class="t" style="left:468px;top:630px;font-size:13.20px;color:#9a9a9a;letter-spacing:0.831px;-webkit-text-stroke:0.25px #9a9a9a;">Автор: mgmeyers</div><div class="t" style="left:468px;top:646px;font-size:13.20px;color:#9a9a9a;letter-spacing:0.887px;-webkit-text-stroke:0.25px #9a9a9a;">Converts quotes to curly quotes, dashes to em dashes, and periods to ellipses</div><svg class="i" style="left:1106.00px;top:617.00px;" width="18" height="18" viewBox="0 0 24 24" fill="none" stroke="#9c9c9c" stroke-width="1.933" stroke-linecap="round" stroke-linejoin="round"><path d="M12.22 2h-.44a2 2 0 0 0-2 2v.18a2 2 0 0 1-1 1.73l-.43.25a2 2 0 0 1-2 0l-.15-.08a2 2 0 0 0-2.73.73l-.22.38a2 2 0 0 0 .73 2.730l.15.1a2 2 0 0 1 1 1.72v.51a2 2 0 0 1-1 1.74l-.15.09a2 2 0 0 0-.73 2.73l.22.38a2 2 0 0 0 2.73.73l.15-.08a2 2 0 0 1 2 0l.43.25a2 2 0 0 1 1 1.73V20a2 2 0 0 0 2 2h.44a2 2 0 0 0 2-2v-.18a2 2 0 0 1 1-1.73l.43-.25a2 2 0 0 1 2 0l.15.08a2 2 0 0 0 2.73-.73l.22-.39a2 2 0 0 0-.73-2.73l-.15-.08a2 2 0 0 1-1-1.74v-.5a2 2 0 0 1 1-1.74l.15-.09a2 2 0 0 0 .73-2.73l-.22-.38a2 2 0 0 0-2.73-.73l-.15.08a2 2 0 0 1-2 0l-.43-.25a2 2 0 0 1-1-1.73V4a2 2 0 0 0-2-2z"/><circle cx="12" cy="12" r="3"/></svg><svg class="i" style="left:1140.00px;top:617.00px;" width="18" height="18" viewBox="0 0 24 24" fill="none" stroke="#9c9c9c" stroke-width="1.933" stroke-linecap="round" stroke-linejoin="round"><path d="M3 6h18"/><path d="M19 6v14c0 1-1 2-2 2H7c-1 0-2-1-2-2V6"/><path d="M8 6V4c0-1 1-2 2-2h4c1 0 2 1 2 2v2"/><line x1="10" x2="10" y1="11" y2="17"/><line x1="14" x2="14" y1="11" y2="17"/></svg><div class="r" style="left:1170px;top:615px;width:40px;height:22px;background:#486ad0;border-radius:11px;"></div><div class="r" style="left:1190px;top:617px;width:18px;height:18px;border-radius:9px;background:#fff"></div><div class="r" style="left:468px;top:670px;width:742px;height:1px;background:#333333;"></div><div class="t" style="left:468px;top:680px;font-size:16.50px;color:#d4d4d4;letter-spacing:1.081px;-webkit-text-stroke:0.15px #d4d4d4;">Status Bar Pomodoro Timer</div><div class="t" style="left:468px;top:702px;font-size:13.20px;color:#9a9a9a;letter-spacing:0.840px;-webkit-text-stroke:0.25px #9a9a9a;">Версия: 0.1.15</div><div class="t" style="left:468px;top:718px;font-size:13.20px;color:#9a9a9a;letter-spacing:0.641px;-webkit-text-stroke:0.25px #9a9a9a;">Автор: kzhovn</div><div class="t" style="left:468px;top:733px;font-size:13.20px;color:#9a9a9a;letter-spacing:0.854px;-webkit-text-stroke:0.25px #9a9a9a;">Adds a pomodoro timer to your status bar.</div><svg class="i" style="left:1072.00px;top:705.00px;" width="18" height="18" viewBox="0 0 24 24" fill="none" stroke="#9c9c9c" stroke-width="1.933" stroke-linecap="round" stroke-linejoin="round"><path d="M12.22 2h-.44a2 2 0 0 0-2 2v.18a2 2 0 0 1-1 1.73l-.43.25a2 2 0 0 1-2 0l-.15-.08a2 2 0 0 0-2.73.73l-.22.38a2 2 0 0 0 .73 2.730l.15.1a2 2 0 0 1 1 1.72v.51a2 2 0 0 1-1 1.74l-.15.09a2 2 0 0 0-.73 2.73l.22.38a2 2 0 0 0 2.73.73l.15-.08a2 2 0 0 1 2 0l.43.25a2 2 0 0 1 1 1.73V20a2 2 0 0 0 2 2h.44a2 2 0 0 0 2-2v-.18a2 2 0 0 1 1-1.73l.43-.25a2 2 0 0 1 2 0l.15.08a2 2 0 0 0 2.73-.73l.22-.39a2 2 0 0 0-.73-2.73l-.15-.08a2 2 0 0 1-1-1.74v-.5a2 2 0 0 1 1-1.74l.15-.09a2 2 0 0 0 .73-2.73l-.22-.38a2 2 0 0 0-2.73-.73l-.15.08a2 2 0 0 1-2 0l-.43-.25a2 2 0 0 1-1-1.73V4a2 2 0 0 0-2-2z"/><circle cx="12" cy="12" r="3"/></svg><svg class="i" style="left:1106.00px;top:705.00px;" width="18" height="18" viewBox="0 0 24 24" fill="none" stroke="#9c9c9c" stroke-width="1.933" stroke-linecap="round" stroke-linejoin="round"><circle cx="12" cy="12" r="10"/><path d="M8 12h8"/><path d="M12 8v8"/></svg><svg class="i" style="left:1140.00px;top:705.00px;" width="18" height="18" viewBox="0 0 24 24" fill="none" stroke="#9c9c9c" stroke-width="1.933" stroke-linecap="round" stroke-linejoin="round"><path d="M3 6h18"/><path d="M19 6v14c0 1-1 2-2 2H7c-1 0-2-1-2-2V6"/><path d="M8 6V4c0-1 1-2 2-2h4c1 0 2 1 2 2v2"/><line x1="10" x2="10" y1="11" y2="17"/><line x1="14" x2="14" y1="11" y2="17"/></svg><div class="r" style="left:1170px;top:703px;width:40px;height:22px;background:#486ad0;border-radius:11px;"></div><div class="r" style="left:1190px;top:705px;width:18px;height:18px;border-radius:9px;background:#fff"></div><div class="r" style="left:468px;top:757px;width:742px;height:1px;background:#333333;"></div><div class="t" style="left:468px;top:767px;font-size:16.50px;color:#d4d4d4;letter-spacing:1.024px;-webkit-text-stroke:0.15px #d4d4d4;">Typewriter Scroll</div><div class="t" style="left:468px;top:789px;font-size:13.20px;color:#9a9a9a;letter-spacing:0.825px;-webkit-text-stroke:0.25px #9a9a9a;">Версия: 0.2.2</div><div class="t" style="left:468px;top:805px;font-size:13.20px;color:#9a9a9a;letter-spacing:0.791px;-webkit-text-stroke:0.25px #9a9a9a;">Автор: death_au</div><div class="t" style="left:468px;top:820px;font-size:13.20px;color:#9a9a9a;letter-spacing:0.837px;-webkit-text-stroke:0.25px #9a9a9a;">Typewriter-style scrolling which keeps the view centered in the editor.</div><svg class="i" style="left:1072.00px;top:792.00px;" width="18" height="18" viewBox="0 0 24 24" fill="none" stroke="#9c9c9c" stroke-width="1.933" stroke-linecap="round" stroke-linejoin="round"><path d="M12.22 2h-.44a2 2 0 0 0-2 2v.18a2 2 0 0 1-1 1.73l-.43.25a2 2 0 0 1-2 0l-.15-.08a2 2 0 0 0-2.73.73l-.22.38a2 2 0 0 0 .73 2.730l.15.1a2 2 0 0 1 1 1.72v.51a2 2 0 0 1-1 1.74l-.15.09a2 2 0 0 0-.73 2.73l.22.38a2 2 0 0 0 2.73.73l.15-.08a2 2 0 0 1 2 0l.43.25a2 2 0 0 1 1 1.73V20a2 2 0 0 0 2 2h.44a2 2 0 0 0 2-2v-.18a2 2 0 0 1 1-1.73l.43-.25a2 2 0 0 1 2 0l.15.08a2 2 0 0 0 2.73-.73l.22-.39a2 2 0 0 0-.73-2.73l-.15-.08a2 2 0 0 1-1-1.74v-.5a2 2 0 0 1 1-1.74l.15-.09a2 2 0 0 0 .73-2.73l-.22-.38a2 2 0 0 0-2.73-.73l-.15.08a2 2 0 0 1-2 0l-.43-.25a2 2 0 0 1-1-1.73V4a2 2 0 0 0-2-2z"/><circle cx="12" cy="12" r="3"/></svg><svg class="i" style="left:1106.00px;top:792.00px;" width="18" height="18" viewBox="0 0 24 24" fill="none" stroke="#9c9c9c" stroke-width="1.933" stroke-linecap="round" stroke-linejoin="round"><circle cx="12" cy="12" r="10"/><path d="M8 12h8"/><path d="M12 8v8"/></svg><svg class="i" style="left:1140.00px;top:792.00px;" width="18" height="18" viewBox="0 0 24 24" fill="none" stroke="#9c9c9c" stroke-width="1.933" stroke-linecap="round" stroke-linejoin="round"><path d="M3 6h18"/><path d="M19 6v14c0 1-1 2-2 2H7c-1 0-2-1-2-2V6"/><path d="M8 6V4c0-1 1-2 2-2h4c1 0 2 1 2 2v2"/><line x1="10" x2="10" y1="11" y2="17"/><line x1="14" x2="14" y1="11" y2="17"/></svg><div class="r" style="left:1170px;top:790px;width:40px;height:22px;background:#486ad0;border-radius:11px;"></div><div class="r" style="left:1190px;top:792px;width:18px;height:18px;border-radius:9px;background:#fff"></div><svg class="i" style="left:1237.00px;top:76.00px;" width="18" height="18" viewBox="0 0 24 24" fill="none" stroke="#a0a0a0" stroke-width="2.000" stroke-linecap="round" stroke-linejoin="round"><path d="M18 6 6 18"/><path d="m6 6 12 12"/></svg></div></div></body></html>
